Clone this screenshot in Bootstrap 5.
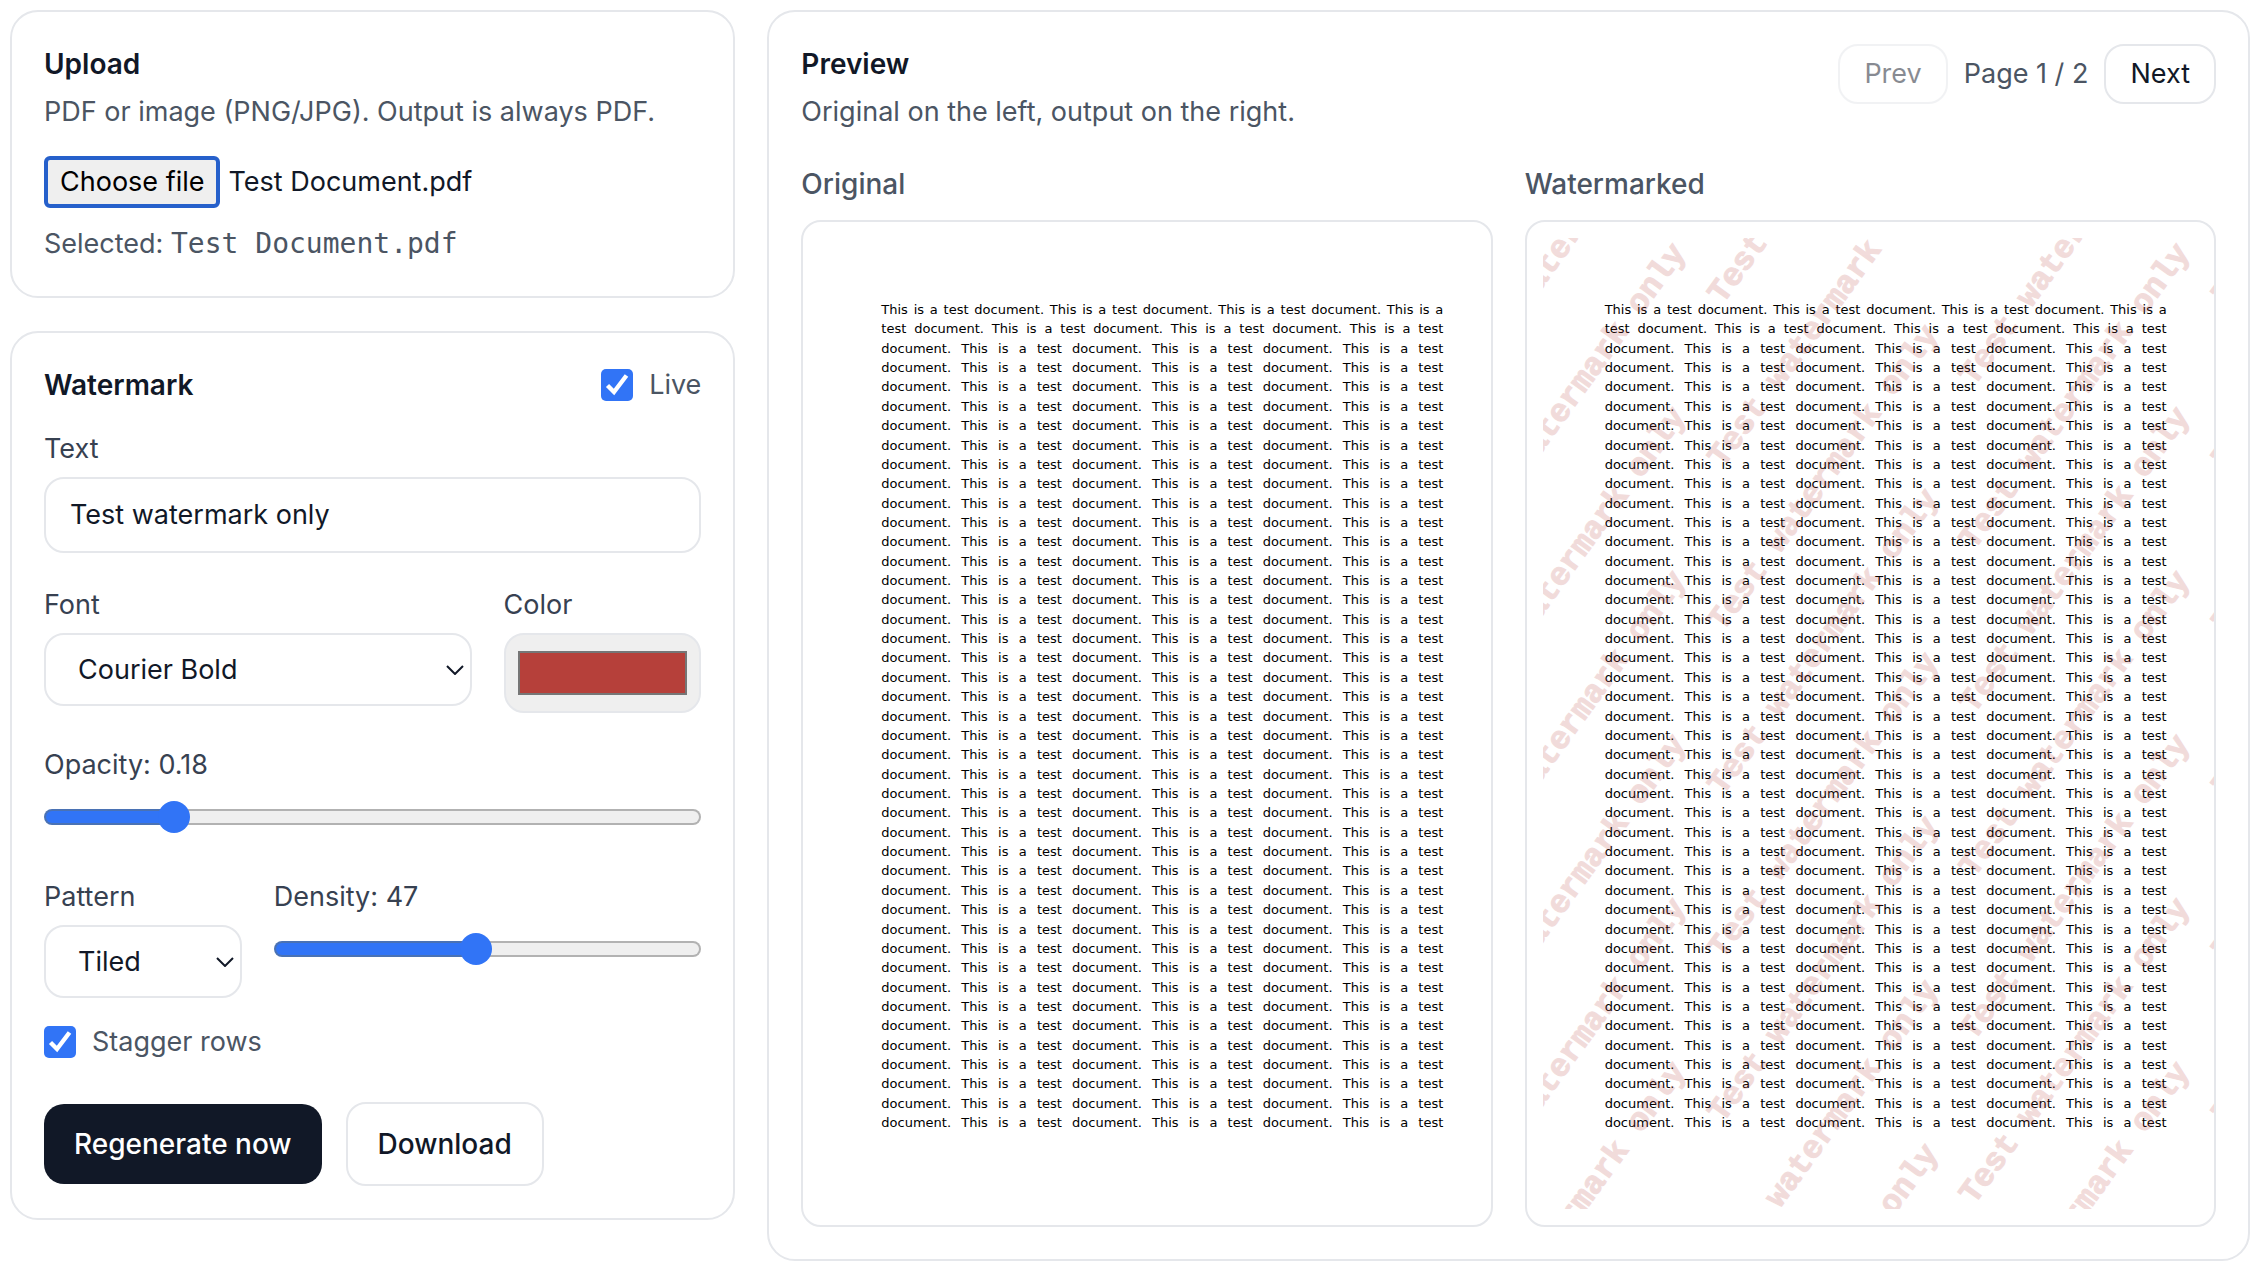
<!DOCTYPE html>
<html lang="en">
<head>
<meta charset="utf-8">
<meta name="viewport" content="width=device-width, initial-scale=1">
<title>PDF Watermark</title>
<link href="https://cdn.jsdelivr.net/npm/bootstrap@5.3.0/dist/css/bootstrap.min.css" rel="stylesheet">
<style>
  :root { --ink: #111827; --soft: #4b5563; --label: #374151; --line: #e5e7eb; --accent: #3174f6; }
  body { font-family: Inter, "Liberation Sans", sans-serif; font-size: 27px; line-height: 40px; color: var(--ink); background: #fff; }
  .app-shell { padding: 10px; }
  .gutter-wide { --bs-gutter-x: 32px; --bs-gutter-y: 32px; }
  .flush-top { margin-top: 0; }
  .flush-top-more { margin-top: 12px; }
  .panel { border: 2px solid var(--line); border-radius: 28px; padding: 32px; background: #fff; }
  .stack { display: flex; flex-direction: column; gap: 33px; }
  .heading { font-size: 28px; line-height: 40px; font-weight: 600; margin: 0; }
  .soft { color: var(--soft); }
  .field-label { display: block; color: var(--label); margin-bottom: 8px; }
  .gap-mid { gap: 16px; }

  .file-btn { height: 52px; line-height: 40px; padding: 2px 12px; border: 4px solid #2660cb; border-radius: 6px; background: #efefef; color: #000; cursor: pointer; }
  .mono { font-family: "DejaVu Sans Mono", monospace; font-size: 28px; }

  .field { border: 2px solid var(--line); border-radius: 20px; font-size: 27px; line-height: 40px; color: var(--ink); }
  .text-field { padding: 16px 24px; }
  .select-field { height: 73px; padding: 12px 40px 12px 32px; background-image: url("data:image/svg+xml,%3Csvg xmlns='http://www.w3.org/2000/svg' viewBox='0 0 18 10'%3E%3Cpath d='M1 1l8 8 8-8' fill='none' stroke='%23111827' stroke-width='2'/%3E%3C/svg%3E"); background-size: 18px 10px; background-position: right 6px center; }
  .color-field { width: 100%; height: 80px; padding: 0; background: #efefef; display: block; }
  .color-field::-webkit-color-swatch-wrapper { padding: 16px 12px; }
  .color-field::-webkit-color-swatch { border: 2px solid #767676; border-radius: 0 !important; }

  .tick { width: 32px; height: 32px; margin: 0; border: 0; border-radius: 5px !important; flex: none; }
  .tick:checked { background-color: var(--accent); background-size: 32px 32px; background-image: url("data:image/svg+xml,%3Csvg xmlns='http://www.w3.org/2000/svg' viewBox='0 0 32 32'%3E%3Cpath d='M6.5 16.5l6.5 6.5L25.5 6.5' fill='none' stroke='%23fff' stroke-width='4.4'/%3E%3C/svg%3E"); }

  .slider { display: block; height: 32px; margin: 16px 0 0; }
  .slider::-webkit-slider-runnable-track {
    height: 16px; border: 2px solid transparent; border-radius: 8px;
    background:
      linear-gradient(90deg, var(--accent) var(--fill), #efefef var(--fill)) padding-box,
      linear-gradient(90deg, #4a72b4 var(--fill), #b2b2b2 var(--fill)) border-box;
  }
  .slider::-webkit-slider-thumb { width: 32px; height: 32px; margin-top: -10px; background: var(--accent); }

  .action { font-size: 28px; line-height: 40px; font-weight: 500; padding: 20px 30px; border-radius: 20px; }
  .action-dark, .action-dark:hover { background: #111827; color: #fff; border: 0; }
  .action-light, .action-light:hover, .pager, .pager:hover { border: 2px solid var(--line); background: #fff; color: var(--ink); }
  .pager { font-size: 27px; line-height: 40px; padding: 8px 24px; border-radius: 20px; }
  .pager:disabled { border-color: var(--line); color: var(--ink); opacity: .5; }

  .sheet-frame { border: 2px solid var(--line); border-radius: 20px; padding: 16px; overflow: hidden; }
  .sheet { position: relative; width: 686px; aspect-ratio: 595 / 842; padding: 62px; overflow: hidden; }
  .sheet-copy { margin: 0; color: #000; font-family: "DejaVu Sans", sans-serif; font-size: 13px; line-height: 1.49; white-space: nowrap; text-align: justify; text-align-last: justify; }
  .stamp-layer { position: absolute; inset: 0; width: 100%; height: 100%; font-family: "Liberation Mono", monospace; font-size: 28px; font-weight: 700; fill: #b6403a; stroke: #b6403a; stroke-width: 1px; opacity: .18; }
</style>
</head>
<body>
<main class="app-shell">
  <div class="row gutter-wide">
    <div class="col-12 col-lg-4 stack">
      <section class="panel">
        <h2 class="heading">Upload</h2>
        <p class="soft mt-2 mb-0">PDF or image (PNG/JPG). Output is always PDF.</p>
        <div class="d-flex align-items-center gap-2 mt-4">
          <input class="visually-hidden" type="file" id="source" accept="application/pdf,image/png,image/jpeg">
          <label class="file-btn" for="source">Choose file</label>
          <span>Test Document.pdf</span>
        </div>
        <p class="soft mt-3 mb-0">Selected: <span class="mono">Test Document.pdf</span></p>
      </section>

      <section class="panel">
        <div class="d-flex justify-content-between align-items-center">
          <h2 class="heading">Watermark</h2>
          <div class="d-flex align-items-center gap-mid">
            <input class="form-check-input tick" type="checkbox" id="live" checked>
            <label class="soft" for="live">Live</label>
          </div>
        </div>
        <div class="mt-4">
          <label class="field-label" for="stamp">Text</label>
          <input class="form-control field text-field" type="text" id="stamp" value="Test watermark only">
        </div>
        <div class="row gutter-wide flush-top">
          <div class="col-8">
            <label class="field-label" for="font">Font</label>
            <select class="form-select field select-field" id="font"><option>Courier Bold</option></select>
          </div>
          <div class="col-4">
            <label class="field-label" for="color">Color</label>
            <input class="field color-field" type="color" id="color" value="#b6403a">
          </div>
          <div class="col-12">
            <label class="d-block field-label mb-0" for="opacity">Opacity: 0.18</label>
            <input class="form-range slider" type="range" id="opacity" min="0" max="1" step="0.01" value="0.18" style="--fill:18%">
          </div>
        </div>
        <div class="row gutter-wide flush-top-more">
          <div class="col-4">
            <label class="field-label" for="pattern">Pattern</label>
            <select class="form-select field select-field" id="pattern"><option>Tiled</option></select>
          </div>
          <div class="col-8">
            <label class="d-block field-label mb-0" for="density">Density: 47</label>
            <input class="form-range slider" type="range" id="density" min="0" max="100" value="47" style="--fill:47%">
          </div>
        </div>
        <div class="d-flex align-items-center gap-mid mt-4">
          <input class="form-check-input tick" type="checkbox" id="stagger" checked>
          <label class="soft" for="stagger">Stagger rows</label>
        </div>
        <div class="d-flex flex-wrap align-items-center gap-4 pt-3 mt-4">
          <button class="btn action action-dark" type="button">Regenerate now</button>
          <button class="btn action action-light" type="button">Download</button>
        </div>
      </section>
    </div>

    <div class="col-12 col-lg-8">
      <section class="panel">
        <div class="d-flex justify-content-between align-items-start">
          <div>
            <h2 class="heading">Preview</h2>
            <p class="soft mt-2 mb-0">Original on the left, output on the right.</p>
          </div>
          <div class="d-flex align-items-center gap-mid">
            <button class="btn pager" type="button" disabled>Prev</button>
            <span class="soft">Page 1 / 2</span>
            <button class="btn pager" type="button">Next</button>
          </div>
        </div>
        <div class="row gutter-wide flush-top">
          <div class="col-12 col-md-6">
            <h3 class="heading soft fw-medium mb-3">Original</h3>
            <div class="sheet-frame"><div class="sheet"><p class="sheet-copy"></p></div></div>
          </div>
          <div class="col-12 col-md-6">
            <h3 class="heading soft fw-medium mb-3">Watermarked</h3>
            <div class="sheet-frame">
              <div class="sheet">
                <p class="sheet-copy"></p>
                <svg class="stamp-layer" id="stamps" viewBox="0 0 595 842" aria-hidden="true"></svg>
              </div>
            </div>
          </div>
        </div>
      </section>
    </div>
  </div>
</main>
<script src="https://cdn.jsdelivr.net/npm/bootstrap@5.3.0/dist/js/bootstrap.bundle.min.js"></script>
<script>
  // Body copy of the sample page: two opening lines, then the repeating line.
  const s = 'This is a test document. ';
  const lines = [s.repeat(3) + 'This is a', 'test document. ' + s.repeat(3).trim().replace(/ document\.$/, '')];
  while (lines.length < 43) lines.push('document. ' + s.repeat(2) + 'This is a test');
  document.querySelectorAll('.sheet-copy').forEach(p => { p.innerHTML = lines.join('<br>'); });

  // Tiled stamps in page points; every other row is shifted by half a tile.
  const layer = document.getElementById('stamps');
  const text = document.getElementById('stamp').value;
  const tileX = 437, tileY = 71, angle = -54;
  for (let r = -4; r < 11; r++) {
    for (let c = -1; c < 2; c++) {
      const x = 156 + c * tileX + (r % 2 ? 218 : 0);
      const y = 342 + r * tileY;
      // A stamp reaches 188 points right and 258 points up; skip those off the page.
      if (x + 188 < 0 || x > 610 || y < 0 || y - 258 > 842) continue;
      const t = document.createElementNS('http://www.w3.org/2000/svg', 'text');
      t.setAttribute('transform', `translate(${x} ${y}) rotate(${angle})`);
      t.textContent = text;
      layer.appendChild(t);
    }
  }
</script>
</body>
</html>
